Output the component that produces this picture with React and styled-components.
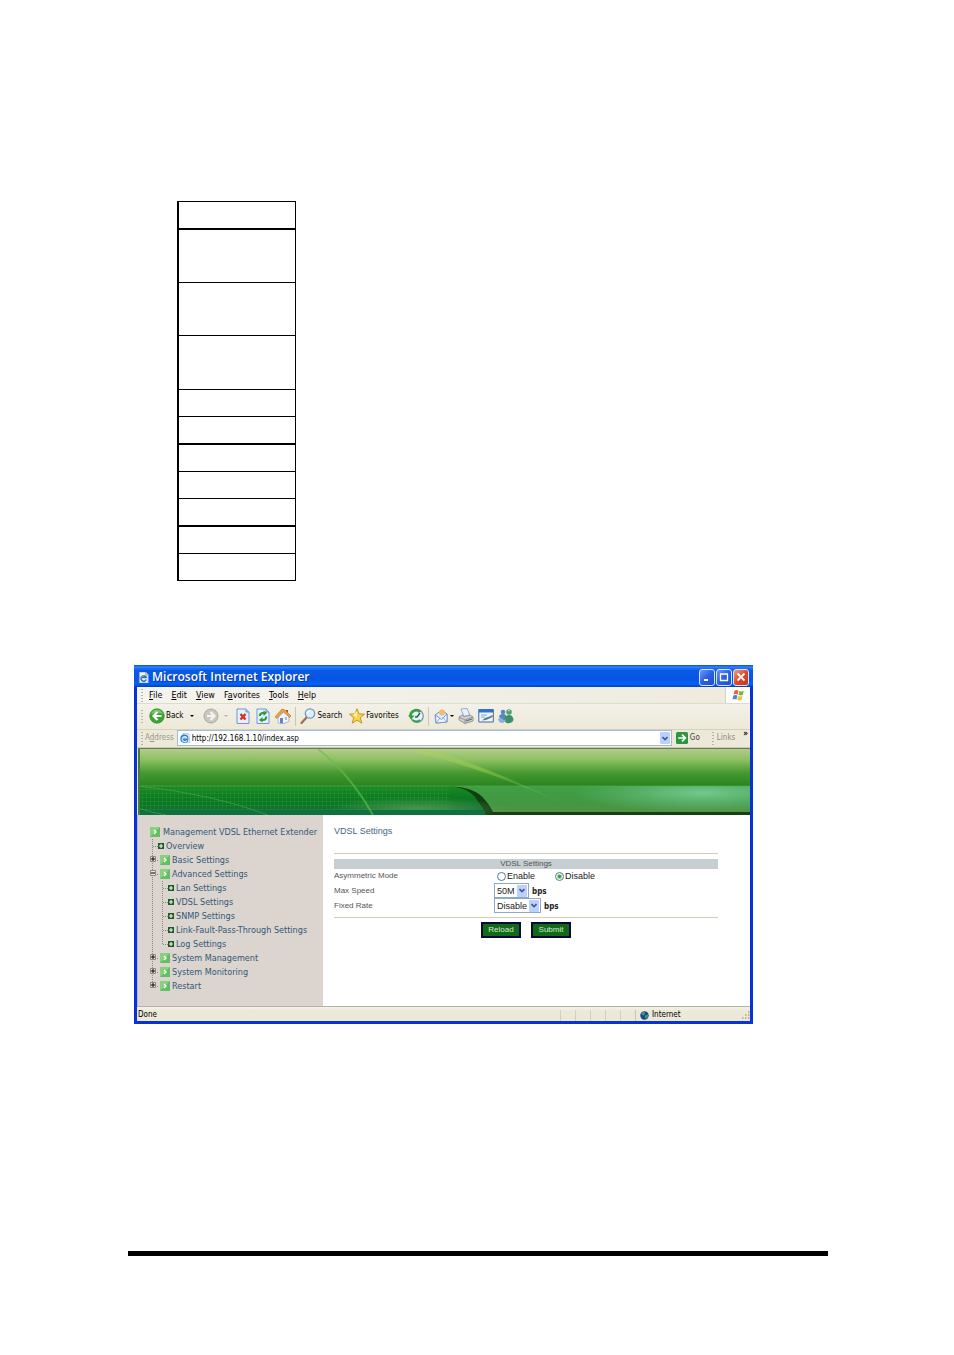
import React from "react";
import styled, { createGlobalStyle } from "styled-components";

const ui = '"DejaVu Sans Condensed", "DejaVu Sans", sans-serif';
const verdana = '"DejaVu Sans", sans-serif';
const arial = '"Liberation Sans", Arial, sans-serif';

const GlobalStyle = createGlobalStyle`
  * { box-sizing: border-box; }
  body { margin: 0; background: #fff; color: #000; font-family: ${arial}; }
  button, input, select { font: inherit; color: inherit; margin: 0; padding: 0; }
  svg { display: block; flex: none; }
  ul { list-style: none; margin: 0; padding: 0; }
`;

const Page = styled.main`
  padding: 201px 126px 99px 128px;
`;

const EmptyTable = styled.table`
  width: 119px;
  margin-left: 49px;
  border-spacing: 0;
  border: 1px solid #000;
  border-left-width: 2px;
  border-bottom: 0;
`;

const EmptyCell = styled.td`
  padding: 0;
  height: ${(p) => p.$height + p.$rule}px;
  border-bottom: ${(p) => p.$rule}px solid #000;
`;

const Browser = styled.section`
  margin: 84px 75px 0 6px;
  border: 3px solid #0831d9;
  border-top: 0;
  background: #ece9d8;
  font: 8px/12px ${ui};
`;

const TitleBar = styled.header`
  display: flex;
  align-items: center;
  gap: 3px;
  height: 22px;
  margin: 0 -3px;
  padding: 2px 4px 0 4px;
  background: linear-gradient(#0a4fd0 0, #2f84f8 2px, #0a5ce8 5px, #0455e3 14px, #0661f8 19px, #0340b8 22px);
`;

const WindowTitle = styled.h1`
  flex: 1;
  margin: 0;
  color: #fff;
  font: 600 12px/20px "Open Sans", sans-serif;
  text-shadow: 1px 1px #0b3a9a;
`;

const CaptionButton = styled.button`
  display: grid;
  place-items: center;
  width: 16px;
  height: 17px;
  margin-left: -2px;
  border: 1px solid #d8e4fb;
  border-radius: 3px;
  color: #fff;
  background: ${(p) => (p.$close ? "linear-gradient(135deg, #f0a080, #e0482a 50%, #c0381c)" : "linear-gradient(135deg, #6f98f5, #2a60e4 50%, #1a4fd4)")};
`;

const MenuBar = styled.nav`
  display: flex;
  align-items: center;
  height: 17px;
  padding-left: 4px;
  background: linear-gradient(90deg, #f5f4ee, #eeebdd);
  border-bottom: 1px solid #e0dccb;
`;

const MenuList = styled.div`
  display: flex;
  gap: 9px;
`;

const Grip = styled.span`
  align-self: center;
  flex: none;
  width: 2px;
  height: 13px;
  margin-right: ${(p) => p.$gap || 0}px;
  background: repeating-linear-gradient(#b8b4a4 0 1px, transparent 1px 3px);
`;

const MenuItem = styled.button`
  padding-top: 1px;
  border: 0;
  background: none;
  font: 8px/15px ${verdana};
`;

const Flag = styled.span`
  display: grid;
  place-items: center;
  align-self: stretch;
  width: 25px;
  margin-left: auto;
  background: #fff;
  border-left: 1px solid #d5d1c0;
`;

const ToolBar = styled.div`
  display: flex;
  align-items: center;
  gap: 4px;
  height: 26px;
  padding: 0 0 1px 4px;
  background: linear-gradient(#f3f1e8, #ece9d8);
  border-bottom: 1px solid #d5d1c0;
`;

const ToolButton = styled.button`
  display: flex;
  align-items: center;
  gap: 1px;
  margin-right: ${(p) => p.$after || 0}px;
  border: 0;
  background: none;
`;

const Caret = styled.i`
  width: 4px;
  margin-left: ${(p) => p.$gap || 0}px;
  border: 2px solid transparent;
  border-top-color: ${(p) => p.$color || "#000"};
  border-bottom: 0;
`;

const Separator = styled.span`
  width: 1px;
  height: 19px;
  background: #cbc7b6;
`;

const AddressBar = styled.form`
  display: flex;
  align-items: center;
  height: 18px;
  padding: 0 2px 1px 4px;
  background: #ece9d8;
  border-bottom: 1px solid #c8c8bc;
`;

const AddressLabel = styled.label`
  margin-right: 3px;
  color: #9a988c;
`;

const AddressField = styled.span`
  display: flex;
  align-items: center;
  gap: 2px;
  flex: 1;
  height: 16px;
  padding-left: 2px;
  background: #fff;
  border: 1px solid #a5bcd8;
`;

const AddressInput = styled.input`
  flex: 1;
  min-width: 0;
  padding-top: 1px;
  border: 0;
  outline: 0;
  background: none;
`;

const GoButton = styled.button`
  display: flex;
  align-items: center;
  gap: 2px;
  margin: 0 12px 0 4px;
  border: 0;
  background: none;
  color: #444;
`;

const LinksLabel = styled.span`
  margin-right: 8px;
  color: #8d8b80;
`;

const Chevron = styled.b`
  align-self: flex-start;
  line-height: 8px;
`;

const ArrowBox = styled.span`
  display: grid;
  place-items: center;
  flex: none;
  width: 10px;
  height: 12px;
  margin-right: 1px;
  border-radius: 1px;
  background: #bdd0fb;
  color: #3c5a9c;
  pointer-events: none;
`;

const Banner = styled.div`
  height: 67px;
  margin-left: 1px;
  border-top: 1px solid #6b7a55;
  svg { width: 100%; height: 100%; }
`;

const Frames = styled.div`
  display: flex;
  background: #fff;
`;

const Sidebar = styled.nav`
  flex: none;
  width: 186px;
  padding: 10px 0 13px 12px;
  border-left: 1px solid #b8b8c8;
  background: #dcd4cf;
  color: #315878;
  font: 9px/14px ${ui};
`;

const Tree = styled.ul`
  && { margin-left: -2px; }
`;

const TreeRow = styled.a`
  display: flex;
  align-items: center;
  height: 14px;
  color: inherit;
  text-decoration: none;
  white-space: nowrap;
`;

const TreeLabel = styled.span`
  padding-left: ${(p) => (p.$root ? 3 : 2)}px;
`;

const Gutters = styled.span`
  display: flex;
  padding-right: ${(p) => (p.$folder ? 2 : 0)}px;
`;

const Content = styled.section`
  flex: 1;
  padding: 9px 32px 0 11px;
  font: 8px/14px ${arial};
  color: #555;
`;

const PageHeading = styled.h2`
  margin: 0 0 15px;
  color: #47677c;
  font: 9px/14px ${arial};
`;

const Settings = styled.form`
  border-top: 1px solid #d1cbb8;
  padding-top: 5px;
`;

const SettingsHeading = styled.h3`
  margin: 0;
  background: #c6ced2;
  font-size: 8px;
  font-weight: normal;
  line-height: 10px;
  text-align: center;
`;

const FieldRow = styled.div`
  display: grid;
  grid-template-columns: 5fr 7fr;
  align-items: center;
  height: ${(p) => p.$height || 15}px;
`;

const FieldControls = styled.div`
  display: flex;
  align-items: center;
  gap: 3px;
  color: #222;
  font-size: 9px;
`;

const Option = styled.label`
  display: flex;
  align-items: center;
  gap: 1px;
  margin: 0 14px 0 3px;
`;

const Radio = styled.input`
  appearance: none;
  width: 9px;
  height: 9px;
  border: 1px solid #52779c;
  border-radius: 50%;
  background: #fff;
  &:checked { background: radial-gradient(circle, #2ba52b 0 1px, #fff 3px); }
`;

const SelectBox = styled.span`
  display: flex;
  align-items: center;
  width: ${(p) => p.$width}px;
  height: 15px;
  border: 1px solid #8fa8c8;
  background: #fff;
`;

const Select = styled.select`
  appearance: none;
  flex: 1;
  min-width: 0;
  padding-left: 2px;
  border: 0;
  outline: 0;
  background: none;
`;

const Unit = styled.b`
  font: bold 8px/12px ${ui};
  padding-top: 3px;
`;

const Actions = styled.div`
  display: flex;
  justify-content: center;
  gap: 10px;
  margin-top: 4px;
  padding-top: 4px;
  border-top: 1px solid #d1cbb8;
`;

const ActionButton = styled.button`
  width: 40px;
  height: 16px;
  border: 2px solid #06083c;
  background: #116a17;
  color: #d5ead2;
  font-size: 8px;
  line-height: 10px;
`;

const StatusBar = styled.footer`
  display: flex;
  align-items: center;
  height: 15px;
  padding: 2px 0 0 1px;
  border-top: 1px solid #b5b3a6;
  background: linear-gradient(#f4f2e8, #ece9d8 4px);
`;

const StatusText = styled.span`
  flex: 1;
`;

const StatusPane = styled.span`
  width: 15px;
  height: 11px;
  border-left: 1px solid #d2cfbf;
`;

const Zone = styled.span`
  display: flex;
  align-items: center;
  justify-content: space-between;
  width: 115px;
  height: 11px;
  padding-left: 4px;
  border-left: 1px solid #c8c5b5;
`;

const ZoneName = styled.span`
  display: flex;
  align-items: center;
  gap: 3px;
`;

const FootRule = styled.hr`
  height: 5px;
  margin: 227px 0 0;
  border: 0;
  background: #000;
`;

const Svg = ({ size = 16, children }) => (
  <svg width={size} height={size} viewBox="0 0 16 16" aria-hidden="true">{children}</svg>
);

const IePage = ({ size }) => (
  <Svg size={size}>
    <path d="M2 0h9l4 4v12H2z" fill="#eef5ff" stroke="#7f9cc8" />
    <path d="M11 0v4h4" fill="#b8cdec" stroke="#7f9cc8" />
    <path d="M12 11a4 4 0 1 1 0-3H5" fill="none" stroke="#2474cf" strokeWidth="2.4" />
    <path d="M2 13C4 6 9 4 13 5" fill="none" stroke="#e3b23b" />
  </Svg>
);

const IeGlobe = () => (
  <Svg size={10}>
    <path d="M5 0h7l4 4v11H5z" fill="#dfeafa" stroke="#8aa5cf" />
    <circle cx="7" cy="9" r="6.500" fill="#2f7fd0" />
    <path d="M11 11.500A4 4 0 1 1 11 8H4" fill="none" stroke="#d6efff" strokeWidth="1.800" />
  </Svg>
);

const BackIcon = () => (
  <Svg>
    <circle cx="8" cy="8" r="7.3" fill="#3aa336" stroke="#2b8a2b" strokeWidth=".6" />
    <path d="M2 6a6.4 6.4 0 0 1 12 0q-6-2-12 0" fill="#8fd87f" opacity=".7" />
    <path d="M8.5 4 4.5 8l4 4M5 8h7.500" fill="none" stroke="#fff" strokeWidth="2.2" />
  </Svg>
);

const ForwardIcon = () => (
  <Svg>
    <circle cx="8" cy="8" r="7" fill="#c9c8c3" stroke="#a9a8a2" />
    <path d="m7.500 4 4 4-4 4M11 8H4" fill="none" stroke="#f6f5f0" strokeWidth="2.200" />
  </Svg>
);

const PageShape = () => (
  <>
    <path d="M2 1h9l3 3v11.500H2z" fill="#e8f0ff" stroke="#6f95d8" />
    <path d="M11 1v3h3" fill="#b5cbf2" stroke="#6f95d8" />
  </>
);

const StopIcon = () => (
  <Svg><PageShape /><path d="m5.500 6 5 5.500m0-5.500-5 5.500" stroke="#d7301c" strokeWidth="2.300" /></Svg>
);

const RefreshIcon = () => (
  <Svg>
    <PageShape />
    <path d="M4.800 8q0-3 3.500-3H10M11.200 8.500q0 3.500-3.500 3.500H6" fill="none" stroke="#2b9b34" strokeWidth="2" />
    <path d="m8.500 2.500 3.500 2.500-3.500 3zM7.500 9 4 12l3.500 2.500z" fill="#2b9b34" />
  </Svg>
);

const HomeIcon = () => (
  <Svg>
    <path d="M11 2h2v4h-2z" fill="#b3532f" />
    <path d="M3 8v7l6 .5 5-2V8L9 3z" fill="#f4f6fc" stroke="#8aa0c8" strokeWidth=".7" />
    <path d="M0 9 7 1l3 1 6 6-1.500 1.500L8.500 4 2 10.500z" fill="#e6a04e" stroke="#b97330" strokeWidth=".6" />
    <path d="M5 10h3v5.300H5z" fill="#5a86cc" />
    <path d="M10 9h2v3h-2z" fill="#9bbbe8" />
  </Svg>
);

const SearchIcon = () => (
  <Svg>
    <path d="m6.500 9.500-5 5.500" stroke="#a06f4c" strokeWidth="2.300" strokeLinecap="round" />
    <circle cx="10" cy="5.500" r="4.700" fill="#d9efff" stroke="#7793bd" strokeWidth="1.200" />
    <path d="M7.500 5.500q0-2.500 2.500-2.500" fill="none" stroke="#fff" strokeWidth="1.300" />
  </Svg>
);

const StarIcon = () => (
  <Svg>
    <path d="m8 .8 2 5 5.500.400-4.200 3.500 1.500 5.500L8 12.200l-4.800 3 1.500-5.500L.5 6.200 6 5.800z" fill="#fbd34a" stroke="#c58b1a" strokeWidth=".9" strokeLinejoin="round" />
    <path d="M8 3v7L4 7z" fill="#fff2a8" />
  </Svg>
);

const HistoryIcon = () => (
  <Svg>
    <circle cx="9" cy="8" r="6.300" fill="#e6f1f8" stroke="#7590a8" strokeWidth="1.200" />
    <path d="M2.500 8a5.500 5.500 0 0 1 9.500-4" fill="none" stroke="#35a23f" strokeWidth="2.600" />
    <path d="M0 7.500h6.500L3.300 11.500z" fill="#35a23f" />
    <path d="M4.500 12q4 3 7.500 0" fill="none" stroke="#35a23f" strokeWidth="1.800" />
    <path d="m12 5-3 4H7" fill="none" stroke="#2f5d48" strokeWidth="1.400" />
  </Svg>
);

const MailIcon = () => (
  <Svg>
    <path d="M2 7 9 2l5 4v8L3 15z" fill="#dce9fb" stroke="#6f93cd" />
    <circle cx="9" cy="4.500" r="3" fill="#f2bc6b" />
    <path d="m2.500 7 6 4.500L14 6v8L3 15z" fill="#f2f7ff" stroke="#6f93cd" strokeWidth=".9" />
    <path d="m3 15 4-5m7 4-4-4.500" stroke="#6f93cd" strokeWidth=".8" />
  </Svg>
);

const PrintIcon = () => (
  <Svg>
    <path d="m3 1 6-.5 3 7-6 1z" fill="#eaf2ff" stroke="#7d99c9" strokeWidth=".8" />
    <path d="m1 9 3-2 2 1.500 6-1.500 3 2v4l-8 2.500L1 12z" fill="#cfced0" stroke="#85868f" strokeWidth=".8" />
    <path d="m1 9 6 3 8-3M7 12v3.500" fill="none" stroke="#85868f" strokeWidth=".8" />
    <path d="m8 12.500 6-2v1l-6 2z" fill="#5a5c68" />
  </Svg>
);

const EditIcon = () => (
  <Svg>
    <path d="M.8 1.500h14.500v12.500H.8z" fill="#eff5ff" stroke="#3d6ca8" />
    <path d="M.8 1.500h14.500v3H.8z" fill="#2d72ce" />
    <path d="M3 7h6M3 9h4" stroke="#8aa5c8" />
    <path d="m4 12.500 3-2.500 6-2 .8 1.500L8 12z" fill="#4d80a0" />
    <path d="m12 8 2.500-1 .5 1.500-2.300 1z" fill="#d15b3a" />
  </Svg>
);

const MessengerIcon = () => (
  <Svg>
    <circle cx="5" cy="4" r="2.300" fill="#5f87b8" />
    <path d="M1 9q0-3 4-3t4 4l-3 3z" fill="#5788ba" />
    <circle cx="11" cy="4" r="2.800" fill="#4f9f79" />
    <path d="M6 13q1-6 5-6t4.500 5q-2 4-7 3z" fill="#3e9067" />
    <path d="M0 11q2-2 4 0t4 0q-1 4-4 4t-4-4" fill="#8db2da" />
    <path d="M10 3q1-1 2 0" stroke="#bfe5d0" fill="none" />
  </Svg>
);

const FlagIcon = () => (
  <Svg size={13}>
    <path d="M3 2q2.500-1.500 5 0L7 7Q4.500 5.500 2 7z" fill="#e8643a" />
    <path d="M9 2.500q2.500 1.200 5.500-.300L13.300 7.500q-2.500 1.200-5.300 0z" fill="#78b848" />
    <path d="M1.700 8q2.500-1.500 5 0l-1.200 5Q3 11.500.5 13z" fill="#5083da" />
    <path d="M7.700 8.500q2.800 1.200 5.300 0l-1.200 5q-2.600 1.200-5.300-.2z" fill="#f0c03c" />
  </Svg>
);

const GoIcon = () => (
  <Svg size={12}>
    <rect width="16" height="16" rx="2" fill="#2f9440" />
    <path d="M3 8h9M8 3.500 12.500 8 8 12.500" fill="none" stroke="#fff" strokeWidth="2.200" />
  </Svg>
);

const GlobeIcon = () => (
  <Svg size={9}>
    <circle cx="8" cy="8" r="7.500" fill="#1c4596" />
    <path d="M3 3q4-3 6 0 0 4-3 5-4 0-3-5M9 8l5-2q1 5-3 8-3-1-2-6" fill="#3fa062" />
  </Svg>
);

const DownArrow = () => (
  <svg width="6" height="5" viewBox="0 0 6 5" aria-hidden="true">
    <path d="m.5 1 2.500 2.500L5.500 1" fill="none" stroke="currentColor" strokeWidth="1.600" />
  </svg>
);

const FolderIcon = () => (
  <svg width="10" height="10" viewBox="0 0 10 10" aria-hidden="true">
    <rect width="10" height="10" fill="#63bd63" />
    <path d="M0 0h10L0 10z" fill="#85d17d" />
    <path d="m4 3 2 2-2 2" fill="none" stroke="#fff" strokeWidth="1.400" />
  </svg>
);

const LeafIcon = () => (
  <svg width="6" height="6" viewBox="0 0 6 6" aria-hidden="true">
    <path d="M0 0h6v6H0z" fill="#1f5a2a" />
    <path d="M1 3h4M3 1v4" stroke="#e4f4dc" strokeWidth="1.200" />
  </svg>
);

const Gutter = ({ branch, last, sign }) => (
  <svg width="10" height="14" viewBox="0 0 10 14" aria-hidden="true">
    <path d={`M4.500 0V${last ? 7 : 14}${branch ? "M5 7.500h5" : ""}`} fill="none" stroke="#8d8884" strokeDasharray="1 1" />
    {sign && (
      <>
        <path d="M2.500 3.500h5v5h-5z" fill="#eee9e5" stroke="#8a8682" />
        <path d={sign === "+" ? "M3 6h4M5 4v4" : "M3 6h4"} stroke="#000" />
      </>
    )}
  </svg>
);

const emptyRows = [
  [26, 2], [52, 1], [52, 1], [53, 1], [26, 1], [26, 2],
  [26, 1], [26, 1], [26, 2], [26, 1], [26, 1],
];

const tree = [
  { label: "Overview" },
  { label: "Basic Settings", sign: "+" },
  {
    label: "Advanced Settings",
    sign: "-",
    items: ["Lan Settings", "VDSL Settings", "SNMP Settings", "Link-Fault-Pass-Through Settings", "Log Settings"],
  },
  { label: "System Management", sign: "+" },
  { label: "System Monitoring", sign: "+" },
  { label: "Restart", sign: "+" },
];

const menus = [["", "F", "ile"], ["", "E", "dit"], ["", "V", "iew"], ["F", "a", "vorites"], ["", "T", "ools"], ["", "H", "elp"]];

const Dropdown = ({ id, width, options }) => (
  <SelectBox $width={width}>
    <Select id={id}>
      {options.map((o) => <option key={o}>{o}</option>)}
    </Select>
    <ArrowBox><DownArrow /></ArrowBox>
  </SelectBox>
);

const BannerArt = () => (
  <svg viewBox="0 0 612 66" preserveAspectRatio="none" aria-hidden="true">
    <defs>
      <linearGradient id="top" x2="0" y2="1">
        <stop offset="0" stopColor="#b1cd88" />
        <stop offset=".3" stopColor="#8cbf62" />
        <stop offset=".65" stopColor="#45992f" />
        <stop offset="1" stopColor="#298322" />
      </linearGradient>
      <linearGradient id="right" x2="0" y2="1">
        <stop offset="0" stopColor="#3f9f45" />
        <stop offset=".6" stopColor="#419841" />
        <stop offset="1" stopColor="#5c8f46" />
      </linearGradient>
      <linearGradient id="left" x2="0" y2="1">
        <stop offset="0" stopColor="#1c8a22" />
        <stop offset=".4" stopColor="#0c7a1f" />
        <stop offset="1" stopColor="#126a38" />
      </linearGradient>
      <linearGradient id="streak">
        <stop offset="0" stopColor="#b4d95c" stopOpacity=".2" />
        <stop offset=".5" stopColor="#9cd04c" stopOpacity=".55" />
        <stop offset="1" stopColor="#6cc04c" stopOpacity=".1" />
      </linearGradient>
      <radialGradient id="glow">
        <stop offset="0" stopColor="#7bd09c" stopOpacity=".85" />
        <stop offset="1" stopColor="#6cc48a" stopOpacity="0" />
      </radialGradient>
      <radialGradient id="shine">
        <stop offset="0" stopColor="#5ba05a" stopOpacity=".8" />
        <stop offset="1" stopColor="#5ba05a" stopOpacity="0" />
      </radialGradient>
      <pattern id="mesh" width="4" height="4" patternUnits="userSpaceOnUse">
        <path d="M0 .5h4M.5 0v4" stroke="#2c9a3a" strokeOpacity=".35" />
      </pattern>
      <clipPath id="lower"><path d="M0 37h612v29H0z" /></clipPath>
    </defs>
    <path d="M0 0h612v37H0z" fill="url(#top)" />
    <path d="M0 37h612v29H0z" fill="url(#right)" />
    <g clipPath="url(#lower)">
      <ellipse cx="565" cy="44" rx="130" ry="20" fill="url(#glow)" />
      <path d="M310 37q28 1 37 14 7 8 9 15h-24z" fill="#123f12" />
      <path d="M0 37h312q20 2 27 14 6 7 9 15H0z" fill="url(#left)" />
      <ellipse cx="280" cy="60" rx="90" ry="12" fill="url(#shine)" />
      <path d="M0 37h312v24H0z" fill="url(#mesh)" />
      <path d="M0 61h346l2 5H0z" fill="#0f7040" />
      <path d="M0 37q75 8 130 29M0 59q15 5 28 7" fill="none" stroke="#46a73a" strokeOpacity=".7" />
      <path d="M354 63h258v3H354z" fill="#173f16" />
    </g>
    <path d="M0 37h612" stroke="#5bae50" strokeOpacity=".6" />
    <path d="M180 0q32 25 55 66" fill="none" stroke="#62c24c" strokeOpacity=".6" strokeWidth="2" />
    <path d="M262 0q70 14 160 53Q350 18 290 0" fill="url(#streak)" />
    <path d="M0 0h2v66H0z" fill="#477c38" />
  </svg>
);

export default function App() {
  return (
    <Page>
      <GlobalStyle />
      <EmptyTable>
        <tbody>
          {emptyRows.map(([height, rule], i) => (
            <tr key={i}><EmptyCell $height={height} $rule={rule} /></tr>
          ))}
        </tbody>
      </EmptyTable>

      <Browser>
        <TitleBar>
          <IePage size={11} />
          <WindowTitle>Microsoft Internet Explorer</WindowTitle>
          <CaptionButton aria-label="Minimize"><svg width="10" height="10"><path d="M2 8h4" stroke="currentColor" strokeWidth="2" /></svg></CaptionButton>
          <CaptionButton aria-label="Maximize"><svg width="10" height="10"><path d="M1.500 2v6.500h7V2M1 2h8" fill="none" stroke="currentColor" strokeWidth="1.300" /></svg></CaptionButton>
          <CaptionButton aria-label="Close" $close><svg width="10" height="10"><path d="m1.500 1.500 7 7m0-7-7 7" stroke="currentColor" strokeWidth="1.800" /></svg></CaptionButton>
        </TitleBar>

        <MenuBar>
          <Grip $gap={6} />
          <MenuList>
            {menus.map(([before, key, after]) => (
              <MenuItem key={key}>{before}<u>{key}</u>{after}</MenuItem>
            ))}
          </MenuList>
          <Flag><FlagIcon /></Flag>
        </MenuBar>

        <ToolBar>
          <Grip $gap={2} />
          <ToolButton $after={5}><BackIcon />Back<Caret $gap={6} /></ToolButton>
          <ToolButton aria-label="Forward" $after={3}><ForwardIcon /><Caret $gap={4} $color="#b5b2a5" /></ToolButton>
          <ToolButton aria-label="Stop"><StopIcon /></ToolButton>
          <ToolButton aria-label="Refresh"><RefreshIcon /></ToolButton>
          <ToolButton aria-label="Home"><HomeIcon /></ToolButton>
          <Separator />
          <ToolButton $after={3}><SearchIcon />Search</ToolButton>
          <ToolButton $after={5}><StarIcon />Favorites</ToolButton>
          <ToolButton aria-label="History"><HistoryIcon /></ToolButton>
          <Separator />
          <ToolButton aria-label="Mail"><MailIcon /><Caret /></ToolButton>
          <ToolButton aria-label="Print"><PrintIcon /></ToolButton>
          <ToolButton aria-label="Edit"><EditIcon /></ToolButton>
          <ToolButton aria-label="Messenger"><MessengerIcon /></ToolButton>
        </ToolBar>

        <AddressBar onSubmit={(e) => e.preventDefault()}>
          <Grip $gap={2} />
          <AddressLabel htmlFor="address">A<u>d</u>dress</AddressLabel>
          <AddressField>
            <IeGlobe />
            <AddressInput id="address" defaultValue="http://192.168.1.10/index.asp" />
            <ArrowBox><DownArrow /></ArrowBox>
          </AddressField>
          <GoButton><GoIcon />Go</GoButton>
          <Grip $gap={3} />
          <LinksLabel>Links</LinksLabel>
          <Chevron>»</Chevron>
        </AddressBar>

        <Banner><BannerArt /></Banner>

        <Frames>
          <Sidebar>
            <TreeRow href="#home"><FolderIcon /><TreeLabel $root>Management VDSL Ethernet Extender</TreeLabel></TreeRow>
            <Tree>
              {tree.map(({ label, sign, items }, i) => (
                <li key={label}>
                  <TreeRow href="#section">
                    <Gutters $folder={Boolean(sign)}><Gutter branch sign={sign} last={i === tree.length - 1} /></Gutters>
                    {sign ? <FolderIcon /> : <LeafIcon />}
                    <TreeLabel>{label}</TreeLabel>
                  </TreeRow>
                  {items && (
                    <ul>
                      {items.map((item, j) => (
                        <li key={item}>
                          <TreeRow href="#page">
                            <Gutters><Gutter /><Gutter branch last={j === items.length - 1} /></Gutters>
                            <LeafIcon />
                            <TreeLabel>{item}</TreeLabel>
                          </TreeRow>
                        </li>
                      ))}
                    </ul>
                  )}
                </li>
              ))}
            </Tree>
          </Sidebar>

          <Content>
            <PageHeading>VDSL Settings</PageHeading>
            <Settings onSubmit={(e) => e.preventDefault()}>
              <SettingsHeading>VDSL Settings</SettingsHeading>
              <FieldRow $height={14} role="radiogroup" aria-labelledby="mode">
                <span id="mode">Asymmetric Mode</span>
                <FieldControls>
                  <Option><Radio type="radio" name="mode" />Enable</Option>
                  <Option><Radio type="radio" name="mode" defaultChecked />Disable</Option>
                </FieldControls>
              </FieldRow>
              <FieldRow>
                <label htmlFor="speed">Max Speed</label>
                <FieldControls><Dropdown id="speed" width={35} options={["50M", "100M"]} /><Unit>bps</Unit></FieldControls>
              </FieldRow>
              <FieldRow>
                <label htmlFor="rate">Fixed Rate</label>
                <FieldControls><Dropdown id="rate" width={47} options={["Disable", "Enable"]} /><Unit>bps</Unit></FieldControls>
              </FieldRow>
              <Actions>
                <ActionButton type="reset">Reload</ActionButton>
                <ActionButton type="submit">Submit</ActionButton>
              </Actions>
            </Settings>
          </Content>
        </Frames>

        <StatusBar>
          <StatusText>Done</StatusText>
          <StatusPane /><StatusPane /><StatusPane /><StatusPane /><StatusPane />
          <Zone>
            <ZoneName><GlobeIcon />Internet</ZoneName>
            <svg width="8" height="8" aria-hidden="true"><path d="M6 1h1.500M6 4h1.500M3 4h1.500M0 7h1.500M3 7h1.500M6 7h1.500" stroke="#aaa694" strokeWidth="1.500" /></svg>
          </Zone>
        </StatusBar>
      </Browser>

      <FootRule />
    </Page>
  );
}
